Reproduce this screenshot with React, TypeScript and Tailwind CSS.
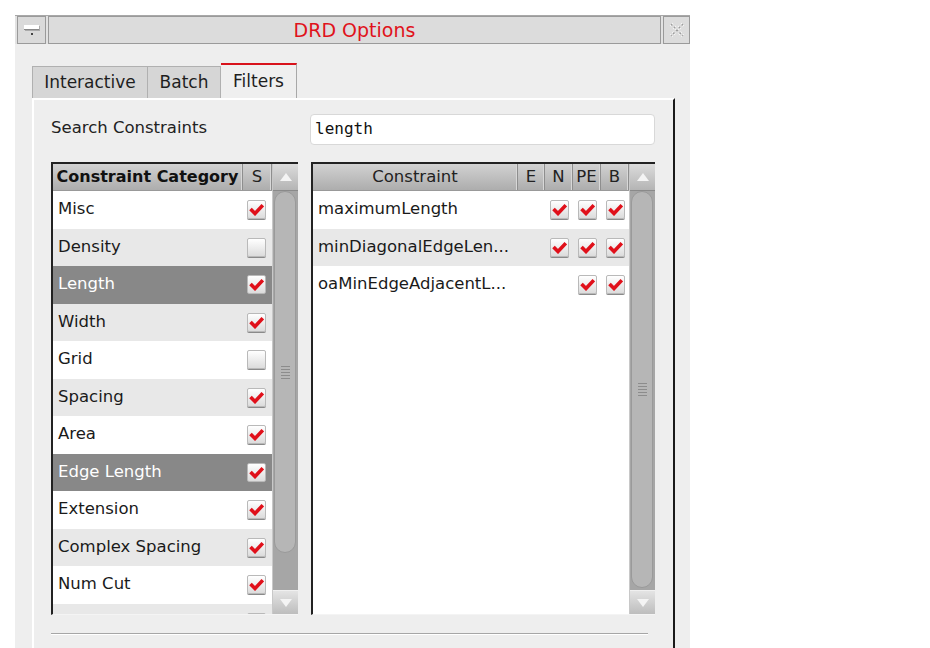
import React from 'react';

const font = { fontFamily: '"DejaVu Sans", "Liberation Sans", sans-serif' };

const Check = ({ on }: { on: boolean }) => (
  <div className="w-[19px] h-[19px] rounded-[2px] border border-[#b9b9b9] bg-gradient-to-b from-[#ffffff] to-[#dcdcdc] shadow-[0_1px_0_#8a8a8a] flex items-center justify-center">
    {on && (
      <svg width="15" height="13" viewBox="0 0 15 13">
        <path d="M1.5 6 L6 10.5 L13.8 2.2" fill="none" stroke="#e0101a" strokeWidth="3.6" strokeLinejoin="miter" />
      </svg>
    )}
  </div>
);

const categories: { name: string; on: boolean; sel?: boolean }[] = [
  { name: 'Misc', on: true },
  { name: 'Density', on: false },
  { name: 'Length', on: true, sel: true },
  { name: 'Width', on: true },
  { name: 'Grid', on: false },
  { name: 'Spacing', on: true },
  { name: 'Area', on: true },
  { name: 'Edge Length', on: true, sel: true },
  { name: 'Extension', on: true },
  { name: 'Complex Spacing', on: true },
  { name: 'Num Cut', on: true },
  { name: '', on: false },
];

const constraints = [
  { name: 'maximumLength', n: true, pe: true, b: true },
  { name: 'minDiagonalEdgeLen...', n: true, pe: true, b: true },
  { name: 'oaMinEdgeAdjacentL...', n: false, pe: true, b: true },
];

const HeadCell = ({ children, className = '' }: { children?: React.ReactNode; className?: string }) => (
  <div className={`h-full flex items-center justify-center border-r border-[#8e8e8e] shadow-[inset_-1px_0_0_#d8d8d8] ${className}`}>
    {children}
  </div>
);

const Scrollbar = ({ thumbBottom }: { thumbBottom: number }) => (
  <div className="w-[26px] flex flex-col bg-[#a6a6a6] border-l border-[#c8c8c8]">
    <div className="h-[27px] bg-gradient-to-b from-[#dcdcdc] to-[#b4b4b4] border-b border-[#8a8a8a] flex items-center justify-center">
      <svg width="14" height="10" viewBox="0 0 14 10">
        <path d="M7 1 L13 9 L1 9 Z" fill="#f4f4f4" />
      </svg>
    </div>
    <div className="flex-1 relative">
      <div
        className="absolute left-[1px] right-[2px] top-0 rounded-b-[12px] rounded-t-[12px] bg-[#b6b6b6] border border-[#9a9a9a] flex items-center justify-center"
        style={{ bottom: thumbBottom }}
      >
        <div className="flex flex-col gap-[2px]">
          {[0, 1, 2, 3, 4].map(i => (
            <div key={i} className="w-[9px] h-[1px] bg-[#8c8c8c]" />
          ))}
        </div>
      </div>
    </div>
    <div className="h-[24px] bg-gradient-to-b from-[#e4e4e4] to-[#bdbdbd] border-t border-[#f0f0f0] flex items-center justify-center">
      <svg width="14" height="10" viewBox="0 0 14 10">
        <path d="M1 1 L13 1 L7 9 Z" fill="#f4f4f4" />
      </svg>
    </div>
  </div>
);

export default function App() {
  return (
    <div className="w-[930px] h-[648px] bg-white overflow-hidden pt-[15px] pl-[15px]" style={font}>
      <div className="w-[675px] h-[633px] flex flex-col bg-[#eeeeee]">
        {/* title bar */}
        <div className="h-[29px] flex border-t border-[#a8a8a8] bg-[#e2e2e2]">
          <div className="w-[29px] ml-[2px] border border-[#9a9a9a] bg-[#dadada] flex flex-col items-center justify-center">
            <div className="w-[15px] h-[5px] bg-white border-b border-[#888] shadow-[1px_1px_0_#aaa]" />
            <div className="w-[2px] h-[2px] bg-[#444] mt-[3px]" />
          </div>
          <div className="flex-1 ml-[2px] border border-[#9a9a9a] bg-[#dcdcdc] flex items-center justify-center text-[19px] text-[#e0121b]">
            DRD Options
          </div>
          <div className="w-[27px] ml-[2px] border border-[#9a9a9a] bg-[#dcdcdc] flex items-center justify-center">
            <svg width="18" height="18" viewBox="0 0 18 18">
              <path d="M3 3 L15 15 M15 3 L3 15" stroke="#f8f8f8" strokeWidth="3.5" strokeDasharray="2 2" />
              <path d="M3 3 L15 15 M15 3 L3 15" stroke="#9c9c9c" strokeWidth="1.5" strokeDasharray="2 2" />
            </svg>
          </div>
        </div>

        {/* body */}
        <div className="flex-1 pl-[17px] pt-[19px] flex flex-col">
          <div className="flex items-end h-[35px] text-[17px] text-[#1e1e1e]">
            <div className="h-[32px] w-[116px] bg-[#d6d6d6] border border-[#b0b0b0] border-b-0 flex items-center justify-center">
              Interactive
            </div>
            <div className="h-[32px] w-[73px] bg-[#d6d6d6] border-t border-r border-[#b0b0b0] flex items-center justify-center">
              Batch
            </div>
            <div className="h-[35px] w-[76px] bg-[#efefef] border-t-2 border-[#d8121b] border-r border-r-[#a8a8a8] flex items-center justify-center">
              Filters
            </div>
          </div>
          <div className="flex-1 w-[643px] border-l-2 border-l-white border-r-2 border-r-[#1a1a1a] border-t-2 border-t-white pl-[17px] pr-[18px] flex flex-col">
            <div className="h-[58px] flex items-center">
              <div className="w-[259px] text-[16.5px] text-[#222] pb-[2px]">Search Constraints</div>
              <div
                className="h-[31px] flex-1 bg-white rounded-[4px] border border-[#d8d8d8] flex items-center px-[4px] text-[16px] text-[#111]"
                style={{ fontFamily: '"DejaVu Sans Mono", "Liberation Mono", monospace' }}
              >
                length
              </div>
            </div>
            <div className="h-[4px]" />
            <div className="flex gap-[13px] h-[453px] text-[16.5px]">
              {/* left table */}
              <div className="w-[247px] flex border-l-2 border-t-2 border-[#222] bg-white border-b border-b-[#f4f4f4]">
                <div className="flex-1 flex flex-col">
                  <div className="h-[27px] flex bg-gradient-to-b from-[#d2d2d2] to-[#adadad] border-b border-[#999]">
                    <HeadCell className="flex-1 font-bold text-[#111] text-[16px]">Constraint Category</HeadCell>
                    <HeadCell className="w-[29px] text-[#222]">S</HeadCell>
                  </div>
                  <div className="flex-1 overflow-hidden">
                    {categories.map((c, i) => (
                      <div
                        key={i}
                        className={`h-[37.5px] flex items-center pl-[5px] pr-[2px] ${
                          c.sel ? 'bg-[#888888] text-white' : i % 2 === 0 ? 'bg-white text-[#1a1a1a]' : 'bg-[#e8e8e8] text-[#1a1a1a]'
                        }`}
                      >
                        <span className="flex-1">{c.name}</span>
                        <div className="w-[27px] flex justify-center">
                          <Check on={c.on} />
                        </div>
                      </div>
                    ))}
                  </div>
                </div>
                <Scrollbar thumbBottom={37} />
              </div>

              {/* right table */}
              <div className="w-[344px] flex border-l-2 border-t-2 border-[#222] bg-white border-b border-b-[#f4f4f4]">
                <div className="flex-1 flex flex-col">
                  <div className="h-[27px] flex bg-gradient-to-b from-[#d2d2d2] to-[#adadad] border-b border-[#999] text-[#222]">
                    <HeadCell className="flex-1">Constraint</HeadCell>
                    <HeadCell className="w-[27px]">E</HeadCell>
                    <HeadCell className="w-[28px]">N</HeadCell>
                    <HeadCell className="w-[28px]">PE</HeadCell>
                    <HeadCell className="w-[28px]">B</HeadCell>
                  </div>
                  <div className="flex-1">
                    {constraints.map((c, i) => (
                      <div
                        key={i}
                        className={`h-[37.5px] flex items-center pl-[5px] text-[#1a1a1a] ${i % 2 === 0 ? 'bg-white' : 'bg-[#e8e8e8]'}`}
                      >
                        <span className="flex-1">{c.name}</span>
                        <div className="w-[27px]" />
                        <div className="w-[28px] flex justify-center">{c.n && <Check on />}</div>
                        <div className="w-[28px] flex justify-center">{c.pe && <Check on />}</div>
                        <div className="w-[28px] flex justify-center">{c.b && <Check on />}</div>
                      </div>
                    ))}
                  </div>
                </div>
                <Scrollbar thumbBottom={2} />
              </div>
            </div>
            <div className="h-[18px]" />
            <div className="w-[597px] h-[2px] bg-[#a6a6a6] border-b border-white" />
          </div>
        </div>
      </div>
    </div>
  );
}
